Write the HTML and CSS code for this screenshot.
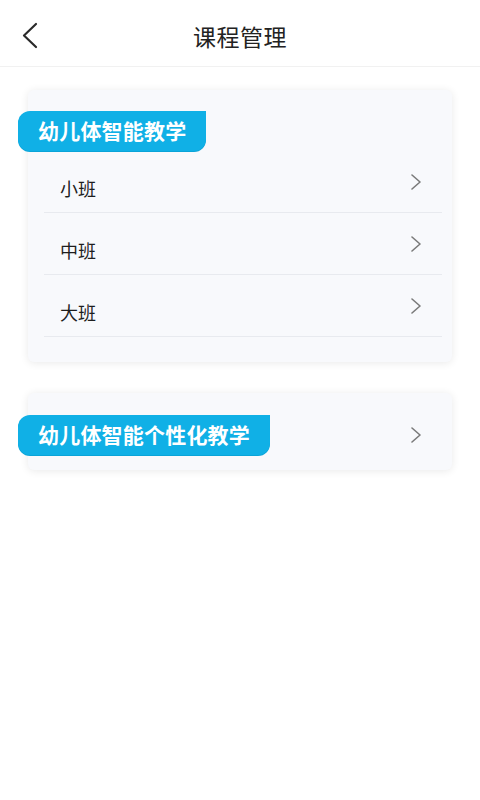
FILE: index.html
```html
<!DOCTYPE html>
<html lang="zh">
<head>
<meta charset="utf-8">
<title>课程管理</title>
<link rel="stylesheet" href="styles.css">
</head>
<body>
<header class="topbar">
  <svg class="back" width="20" height="30" viewBox="0 0 20 30"><polyline points="14,3 2,14.5 14,26" fill="none" stroke="#2a2a2a" stroke-width="2.2" stroke-linecap="round" stroke-linejoin="round"/></svg>
  <h1 class="title">课程管理</h1>
</header>
<main class="content">
  <section class="card card-list">
    <div class="badge">幼儿体智能教学</div>
    <ul class="rows">
      <li class="row"><span class="row-text">小班</span><svg class="chev" width="12" height="16" viewBox="0 0 12 16"><polyline points="2,1 10,8 2,15" fill="none" stroke="#7a7a7a" stroke-width="1.6" stroke-linecap="round" stroke-linejoin="round"/></svg></li>
      <li class="row"><span class="row-text">中班</span><svg class="chev" width="12" height="16" viewBox="0 0 12 16"><polyline points="2,1 10,8 2,15" fill="none" stroke="#7a7a7a" stroke-width="1.6" stroke-linecap="round" stroke-linejoin="round"/></svg></li>
      <li class="row"><span class="row-text">大班</span><svg class="chev" width="12" height="16" viewBox="0 0 12 16"><polyline points="2,1 10,8 2,15" fill="none" stroke="#7a7a7a" stroke-width="1.6" stroke-linecap="round" stroke-linejoin="round"/></svg></li>
    </ul>
  </section>
  <section class="card card-single">
    <div class="badge">幼儿体智能个性化教学</div>
    <svg class="chev" width="12" height="16" viewBox="0 0 12 16"><polyline points="2,1 10,8 2,15" fill="none" stroke="#7a7a7a" stroke-width="1.6" stroke-linecap="round" stroke-linejoin="round"/></svg>
  </section>
</main>
</body>
</html>
```
FILE: styles.css
```css
* { box-sizing: border-box; }
html, body { margin: 0; padding: 0; background: #ffffff; }
body {
  width: 480px;
  min-height: 800px;
  font-family: "Noto Sans CJK SC", "Noto Sans", sans-serif;
  color: #222;
}
.topbar {
  height: 67px;
  display: flex;
  align-items: center;
  justify-content: center;
  position: relative;
  border-bottom: 1px solid #f1f1f1;
}
.back {
  position: absolute;
  left: 22px;
  top: 21px;
}
.title {
  margin: 0;
  font-size: 23px;
  font-weight: 400;
  color: #222;
  letter-spacing: 0.5px;
  padding-top: 6px;
}
.content {
  padding: 23px 28px 0 28px;
  display: flex;
  flex-direction: column;
  gap: 31px;
}
.card {
  background: #f8f9fc;
  border-radius: 6px;
  box-shadow: 0 1px 8px rgba(0, 0, 0, 0.09);
}
.badge {
  display: inline-flex;
  align-items: center;
  height: 40px;
  margin-left: -10px;
  padding: 0 20px 2px 20px;
  background: #10b0e6;
  color: #fff;
  font-size: 21px;
  font-weight: 700;
  letter-spacing: 0.2px;
  border-radius: 12px 0 12px 12px;
  box-shadow: 0 1px 0 #0aa4d8;
  white-space: nowrap;
}
.card-list {
  padding: 21px 0 25px 0;
}
.rows {
  list-style: none;
  margin: 0;
  padding: 0 10px 0 16px;
}
.row {
  height: 62px;
  display: flex;
  align-items: center;
  justify-content: space-between;
  border-bottom: 1px solid #e8eaef;
  padding: 0 20px 0 16px;
}
.row-text {
  font-size: 18px;
  color: #1e1e1e;
  margin-top: 12px;
}
.card-single {
  padding: 22px 30px 15px 0;
  display: flex;
  align-items: center;
  justify-content: space-between;
}
```
